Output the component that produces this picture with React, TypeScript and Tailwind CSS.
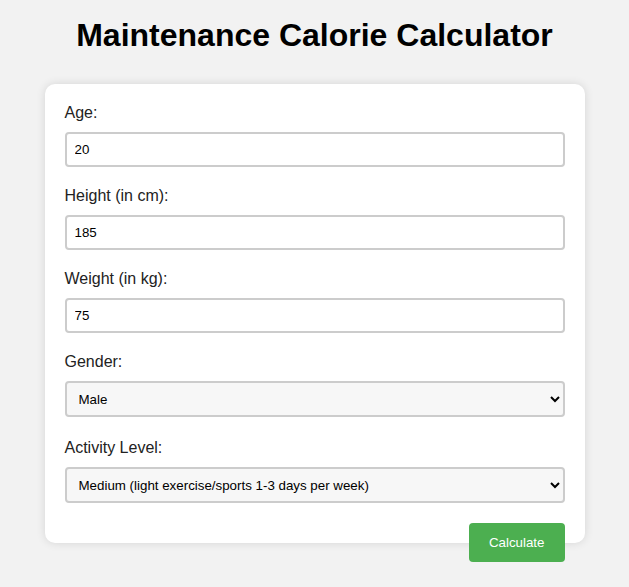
import React from "react";

function Field({ label, children, last }: { label: string; children: React.ReactNode; last?: boolean }) {
  return (
    <div className={last ? "" : ""}>
      <label className="block text-[16px] leading-[18px] text-[#222] mb-[10px]">{label}</label>
      {children}
    </div>
  );
}

export default function App() {
  const inputCls =
    "block w-full h-[35px] px-[8px] border-2 border-[#cccccc] rounded-[4px] bg-white text-[13.33px] text-black mb-[20px] outline-none";
  const selectCls =
    "block w-full h-[36px] px-[8px] border-2 border-[#cccccc] rounded-[4px] bg-[#f7f7f7] text-[13.33px] text-black outline-none";
  return (
    <div
      className="min-h-[587px] w-full bg-[#f2f2f2] pt-[17px]"
      style={{ fontFamily: '"Liberation Sans", Arial, sans-serif' }}
    >
      <h1 className="text-center text-[32px] font-bold text-black leading-[37px]">
        Maintenance Calorie Calculator
      </h1>
      <div className="mx-auto mt-[30px] w-[540px] bg-white rounded-[10px] shadow-[0_0_10px_rgba(0,0,0,0.12)] px-[20px] pt-[20px] pb-[20px]">
        <Field label="Age:">
          <input className={inputCls} defaultValue="20" type="text" />
        </Field>
        <Field label="Height (in cm):">
          <input className={inputCls} defaultValue="185" type="text" />
        </Field>
        <Field label="Weight (in kg):">
          <input className={inputCls} defaultValue="75" type="text" />
        </Field>
        <Field label="Gender:">
          <select className={selectCls + " mb-[22px]"} defaultValue="male">
            <option value="male">Male</option>
            <option value="female">Female</option>
          </select>
        </Field>
        <Field label="Activity Level:">
          <select className={selectCls + " mb-[20px]"} defaultValue="medium">
            <option value="low">Low (little or no exercise)</option>
            <option value="medium">Medium (light exercise/sports 1-3 days per week)</option>
            <option value="high">High (hard exercise/sports 6-7 days a week)</option>
          </select>
        </Field>
        <div className="flex justify-end h-0">
          <button className="shrink-0 h-[39px] px-[20px] bg-[#4caf50] text-white text-[13.33px] rounded-[4px]">
            Calculate
          </button>
        </div>
      </div>
    </div>
  );
}
